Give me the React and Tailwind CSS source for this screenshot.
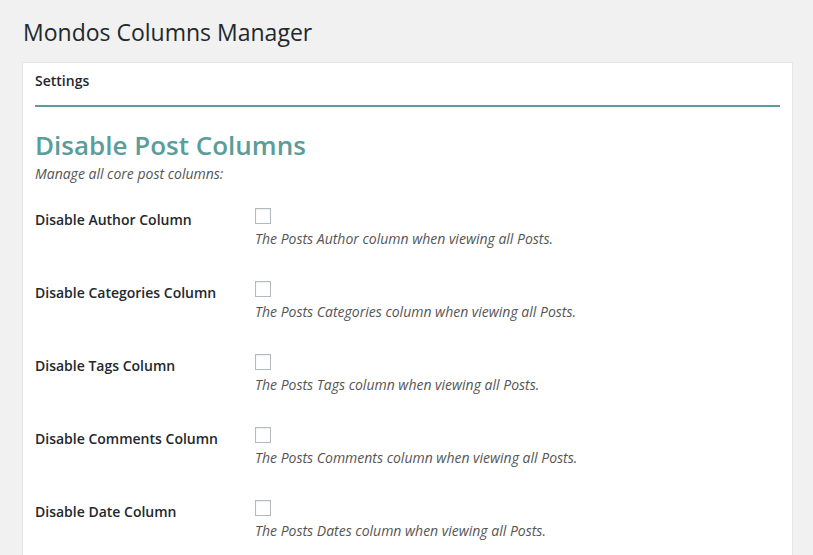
export default function App() {
  const rows = [
    ["Disable Author Column", "The Posts Author column when viewing all Posts."],
    ["Disable Categories Column", "The Posts Categories column when viewing all Posts."],
    ["Disable Tags Column", "The Posts Tags column when viewing all Posts."],
    ["Disable Comments Column", "The Posts Comments column when viewing all Posts."],
    ["Disable Date Column", "The Posts Dates column when viewing all Posts."],
  ];
  return (
    <div
      className="w-[813px] h-[555px] overflow-hidden bg-[#f1f1f1] pl-[22px] pr-[20px] text-[#23282d]"
      style={{ fontFamily: '"Open Sans", "Noto Sans", sans-serif' }}
    >
      <h1 className="pt-[18px] text-[23px] leading-[29px] font-normal pl-px">Mondos Columns Manager</h1>
      <div className="mt-[15px] bg-white border border-[#e5e5e5] px-[12px] pt-[9px] pb-8">
        <div className="text-[14px] leading-[18px] font-semibold">Settings</div>
        <div className="mt-[15px] h-[2px] bg-[#5a9d99]" />
        <h2 className="mt-[21px] text-[26px] leading-[34px] font-semibold text-[#5a9d99]">Disable Post Columns</h2>
        <p className="mt-[3px] text-[14px] leading-[17px] italic text-[#555]">Manage all core post columns:</p>
        <div className="mt-[8px]">
          {rows.map(([label, desc]) => (
            <div key={label} className="flex h-[73px]">
              <div className="w-[220px] shrink-0 pt-[21px] text-[14px] leading-[18px] font-semibold">{label}</div>
              <div className="pt-[18px]">
                <div className="w-4 h-4 border border-[#b4b9be] bg-white shadow-[inset_0_1px_2px_rgba(0,0,0,0.07)]" />
                <p className="mt-[6px] text-[14px] leading-[18px] italic text-[#555]">{desc}</p>
              </div>
            </div>
          ))}
        </div>
      </div>
    </div>
  );
}
